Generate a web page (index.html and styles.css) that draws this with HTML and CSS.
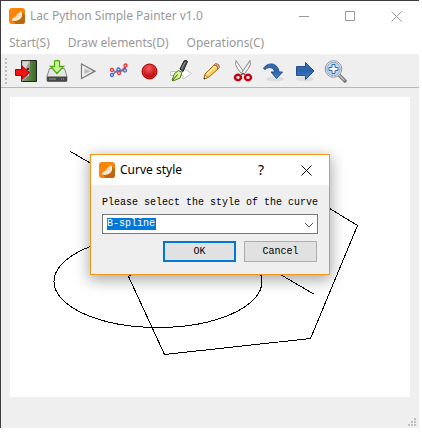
FILE: index.html
```html
<!DOCTYPE html>
<html lang="en">
<head>
<meta charset="utf-8">
<title>Lac Python Simple Painter v1.0</title>
<link rel="stylesheet" href="styles.css">
</head>
<body>
<svg class="defs" aria-hidden="true">
  <defs>
    <linearGradient id="orange" x1="0" y1="0" x2="1" y2="1"><stop offset=".5" stop-color="#fb8509"/><stop offset="1" stop-color="#dd780c"/></linearGradient>
    <linearGradient id="blue" x1="0" y1="0" x2="0" y2="1"><stop offset="0" stop-color="#3b6fb6"/><stop offset=".5" stop-color="#2c62a8"/><stop offset="1" stop-color="#4a86cc"/></linearGradient>
    <linearGradient id="green" x1="0" y1="0" x2="1" y2="0"><stop offset="0" stop-color="#8a9a78"/><stop offset="1" stop-color="#356a1c"/></linearGradient>
    <linearGradient id="metal" x1="0" y1="0" x2="1" y2="0"><stop offset="0" stop-color="#fafafa"/><stop offset="1" stop-color="#a9a9a9"/></linearGradient>
    <radialGradient id="red" cx=".45" cy=".3" r=".7"><stop offset="0" stop-color="#f26060"/><stop offset=".6" stop-color="#cf1c20"/><stop offset="1" stop-color="#a80000"/></radialGradient>
    <symbol id="logo" viewBox="0 0 16 16">
      <rect width="16" height="16" rx="3" fill="url(#orange)"/>
      <path d="M13 4.500 16 7.500V13a3 3 0 0 1-3 3H7l-3.500-3.500z" fill="#bd670f"/>
      <path d="M11.500 3C14 5.500 13.500 9 11 11 8.500 13 5.500 13.500 3 12.500L3.500 10.500 7 8.500 8.500 5.500 10.500 5z" fill="#fff3e2"/>
      <path d="M9 8 12.800 7M9 8.500l2 2M8.500 8.500l-.8 3.700M8 9l-3.500 2.500M9 8l2-3.500" stroke="#f3ae68" stroke-width=".5" fill="none"/>
    </symbol>
  </defs>
</svg>
<main class="window">
  <header class="titlebar">
    <svg class="logo"><use href="#logo"/></svg>
    <h1 class="title">Lac Python Simple Painter v1.0</h1>
    <button class="caption" aria-label="Minimize"><svg viewBox="0 0 11 11"><path d="M0 5.500h10"/></svg></button>
    <button class="caption" aria-label="Maximize"><svg viewBox="0 0 11 11"><path d="M.5.5h9v9h-9z"/></svg></button>
    <button class="caption" aria-label="Close"><svg viewBox="0 0 11 11"><path d="m.5.5 10 10m0-10-10 10"/></svg></button>
  </header>
  <nav class="menubar">
    <button>Start(S)</button>
    <button>Draw elements(D)</button>
    <button>Operations(C)</button>
  </nav>
  <div class="toolbar" role="toolbar" aria-label="Drawing tools">
    <span class="grip"></span>
    <button class="tool" aria-label="Exit"><svg viewBox="0 0 24 24">
      <path d="M7.500 1.500h15v21h-15z" fill="url(#green)" stroke="#222"/>
      <path d="M8 2h8l-1 15-7 5z" fill="#d9d9d3" stroke="#777" stroke-width=".5"/><path d="M15.500 2 14 18l-6 4.500V18l4-3V9z" fill="#989890"/><circle cx="14" cy="10" r="1" fill="#111"/>
      <path d="M1.500 10.500H8V7l7.500 6.500L8 20v-3.500H1.500z" fill="#ef1515" stroke="#b30000"/></svg></button>
    <button class="tool" aria-label="Save"><svg viewBox="0 0 24 24">
      <path d="m4.500 9.500-2.500 8v4q0 1 1 1h18q1 0 1-1v-4l-2.500-8z" fill="#e5e5e5" stroke="#888"/>
      <path d="M2 17.500h20v4q0 1-1 1H3q-1 0-1-1z" fill="#454845"/><path d="M4 20h7" stroke="#999"/><path d="M16 20h4" stroke="#aaa" stroke-dasharray="1"/>
      <path d="M9.500 2q3-1 5 0v5.500h4L12 14.500 5.500 7.500h4z" fill="#c9f29b" stroke="#4faf0a" stroke-width="1.300"/></svg></button>
    <button class="tool" aria-label="Run"><svg viewBox="0 0 24 24"><path d="M5.500 5v14.500L19 12.200z" fill="url(#metal)" stroke="#777" stroke-width="1.200"/><path d="M7 7.500v9.500l9-4.800z" fill="none" stroke="#eee"/><path d="M8.500 10v5l5-2.800z" fill="#bbb"/></svg></button>
    <button class="tool" aria-label="Curve"><svg viewBox="0 0 24 24" fill="#efefef" stroke-width="1.300">
      <path d="m5 16 6-5 6 1 2-5" stroke="#4474d8" fill="none"/><path d="m5 11 7 3 7-7" stroke="#ef4040" fill="none"/>
      <g stroke="#3c70d6"><circle cx="5" cy="16" r="1.500"/><circle cx="11.500" cy="10.500" r="1.500"/><circle cx="18" cy="11.500" r="1.500"/></g><g stroke="#ef3434"><circle cx="5" cy="11" r="1.500"/><circle cx="12" cy="14" r="1.500"/><circle cx="18.500" cy="6.500" r="1.500"/></g></svg></button>
    <button class="tool" aria-label="Record"><svg viewBox="0 0 24 24"><circle cx="11.500" cy="12.500" r="7.500" fill="url(#red)" stroke="#a50000"/><circle cx="11.500" cy="12.500" r="6.300" fill="none" stroke="#e04444" stroke-width=".7"/></svg></button>
    <button class="tool" aria-label="Pen"><svg viewBox="0 0 24 24">
      <path d="M1.500 12.500H14V9l8.500 5.500L14 20v-3.500H1.500z" fill="#fff" stroke="#c4c4c4"/>
      <path d="m11 10 4-8q2.500-1.500 3.500.5L14 12.500z" fill="#4d5553" stroke="#1d2220"/><path d="m12.500 10 3.700-7" stroke="#999"/>
      <path d="m9.500 11.500 3.500 2-2 5.500-7 3-1-1 2.500-6.500z" fill="#d7f09a" stroke="#4c7912"/><path d="m3.500 21.500 5-6" stroke="#35550e"/></svg></button>
    <button class="tool" aria-label="Pencil"><svg viewBox="0 0 24 24">
      <path d="m5 15 9-9q4 0 4 4l-9 8-5 2z" fill="#f7cf62" stroke="#a56b10"/><path d="m7 15 9-8" stroke="#fff0ad" stroke-width="1.500"/><path d="m14 6 1.500-1.500q4 0 4 4L18 10q0-4-4-4z" fill="#efabab" stroke="#9d7145"/><path d="m4 20 1-4 3 2.500z" fill="#f6e4bd" stroke="#96651c" stroke-width=".7"/><path d="m3.800 20.200 1.500-.7-.9-.9z" fill="#222"/></svg></button>
    <button class="tool" aria-label="Cut"><svg viewBox="0 0 24 24">
      <path d="M5 1.500q-1.500 4 1.500 8l5 6.500 2-2z" fill="#fafafa" stroke="#888"/><path d="M19 1.500q1.500 4-1.500 8l-5 6.500-2-2z" fill="#eee" stroke="#888"/><path d="m10 16 2-2 2 2" stroke="#555" fill="none"/>
      <g fill="#eee" stroke="#c80010" stroke-width="2.500"><ellipse cx="7" cy="18.500" rx="3" ry="2.700"/><ellipse cx="17" cy="18.500" rx="3" ry="2.700"/></g></svg></button>
    <button class="tool" aria-label="Rotate"><svg viewBox="0 0 24 24"><ellipse cx="13" cy="20" rx="9" ry="2.500" fill="#ddd"/><path d="M1.500 9.500C5 3 16 3 17 13h3.500l-6 6.500-5.500-6.500h3.500C12 8.500 7 7 3 10.500z" fill="url(#blue)" stroke="#20518f"/></svg></button>
    <button class="tool" aria-label="Move"><svg viewBox="0 0 24 24"><ellipse cx="12" cy="20" rx="9" ry="2.500" fill="#ddd"/><path d="M3.500 7.500h9v-4l8.500 8.500-8.500 8.500v-4h-9z" fill="url(#blue)" stroke="#20518f"/></svg></button>
    <button class="tool" aria-label="Zoom"><svg viewBox="0 0 24 24"><path d="m15 16 6 6" stroke="#777" stroke-width="3.500" stroke-linecap="round"/><path d="m15 16 5.500 5.500" stroke="#c7c7c7" stroke-width="1.300"/><circle cx="9.500" cy="10" r="8.300" fill="#f4f4f4" stroke="#929292"/><circle cx="9.500" cy="10" r="6.700" fill="#bed9f5" stroke="#82a6ce"/><path d="M8 5.500h3v3h3v3h-3v3H8v-3H5v-3h3z" fill="#fff" stroke="#3269ae"/></svg></button>
  </div>
  <section class="workspace">
    <svg class="canvas" viewBox="0 0 400 300" preserveAspectRatio="xMinYMin" role="img" aria-label="Drawing">
      <path d="m60.500 54.500 244 143M118.500 179.500l36 78 146-16 47-113-80-49z"/>
      <ellipse cx="148" cy="184.500" rx="104" ry="46"/>
    </svg>
  </section>
  <footer class="statusbar"><svg viewBox="0 0 8 8"><path d="M6 0h2v2H6zM3 3h2v2H3zM6 3h2v2H6zM0 6h2v2H0zM3 6h2v2H3zM6 6h2v2H6z"/></svg></footer>
</main>
<form class="dialog" role="dialog" aria-labelledby="dialog-title">
  <header class="dialog-bar">
    <svg class="logo"><use href="#logo"/></svg>
    <h2 class="title" id="dialog-title">Curve style</h2>
    <button type="button" class="caption help" aria-label="Help">?</button>
    <button type="button" class="caption" aria-label="Close"><svg viewBox="0 0 11 11"><path d="m.5.5 10 10m0-10-10 10"/></svg></button>
  </header>
  <div class="dialog-body">
    <label for="style">Please select the style of the curve</label>
    <div class="combo">
      <select id="style"><option>B-spline</option></select>
      <svg viewBox="0 0 10 6"><path d="m1 1 4 4 4-4"/></svg>
    </div>
    <div class="actions">
      <button type="button" class="primary">OK</button>
      <button type="button">Cancel</button>
    </div>
  </div>
</form>
</body>
</html>
```
FILE: styles.css
```css
* { box-sizing: border-box; }

body {
  margin: 0;
  background: #fff;
  font: 12px/16px "Noto Sans", sans-serif;
}

button {
  margin: 0;
  padding: 0;
  border: 0;
  background: none;
  font: inherit;
  color: inherit;
}

svg { display: block; }

.defs { position: absolute; width: 0; height: 0; }

.window {
  display: flex;
  flex-direction: column;
  height: calc(100vh - 5px);
  margin-right: 3px;
  border-top: 1px solid #403d40;
  border-left: 1px solid #403d40;
  background: #efefef;
  color: #999;
}

.titlebar,
.dialog-bar {
  display: flex;
  align-items: center;
  height: 30px;
  padding-left: 8px;
  background: #fff;
}

.logo { width: 16px; height: 16px; margin-right: 5px; }

.title {
  flex: 1;
  margin: 0;
  font-size: 12px;
  font-weight: 400;
  white-space: nowrap;
}

.caption {
  display: grid;
  place-items: center;
  width: 46px;
  height: 30px;
}

.caption svg { width: 11px; height: 11px; fill: none; stroke: currentColor; }

.menubar {
  display: flex;
  gap: 18px;
  height: 24px;
  padding: 0 8px;
  border-bottom: 1px solid #f2f2f2;
  background: #fff;
}

.toolbar {
  display: flex;
  align-items: center;
  gap: 7px;
  height: 33px;
  padding-left: 4px;
  border-bottom: 1px solid #b5b5b5;
}

.grip {
  width: 2px;
  height: 26px;
  background: repeating-linear-gradient(#bdbdbd 0 2px, transparent 2px 4px);
}

.tool svg { width: 24px; height: 24px; }

.workspace {
  flex: 1;
  min-height: 0;
  padding: 9px 9px 0;
}

.canvas {
  width: 100%;
  height: 100%;
  background: #fff;
  fill: none;
  stroke: #000;
  shape-rendering: crispEdges;
}

.statusbar {
  display: flex;
  align-items: flex-end;
  justify-content: flex-end;
  height: 31px;
  padding: 2px 3px;
}

.statusbar svg { width: 8px; height: 8px; fill: #bfbfbf; }

.dialog {
  position: absolute;
  top: 154px;
  left: 90px;
  width: 240px;
  border: 1px solid #f7941d;
  background: #efefef;
  box-shadow: 0 4px 14px 1px rgba(0, 0, 0, .35);
  color: #000;
}

.dialog .caption.help { width: 44px; font-size: 14px; }

.dialog-body {
  padding: 10px 12px 12px 11px;
  font: 10px/16px "Liberation Mono", monospace;
}

.dialog-body label { display: block; white-space: nowrap; }

.combo { position: relative; margin: 3px -1px 0 0; }

.combo select {
  display: block;
  width: 100%;
  height: 20px;
  padding: 0 4px;
  border: 1px solid #7a7a7a;
  border-radius: 0;
  appearance: none;
  background: linear-gradient(#0078d7, #0078d7) 4px 3px / 49px 12px no-repeat #fff;
  font: inherit;
  color: #fff;
}

.combo svg {
  position: absolute;
  top: 8px;
  right: 4px;
  width: 10px;
  height: 6px;
  fill: none;
  stroke: #555;
  pointer-events: none;
}

.actions {
  display: flex;
  justify-content: flex-end;
  gap: 8px;
  margin-top: 7px;
}

.actions button {
  width: 73px;
  height: 21px;
  border: 1px solid #adadad;
  background: #e1e1e1;
}

.actions .primary { border: 2px solid #0078d7; }
```
